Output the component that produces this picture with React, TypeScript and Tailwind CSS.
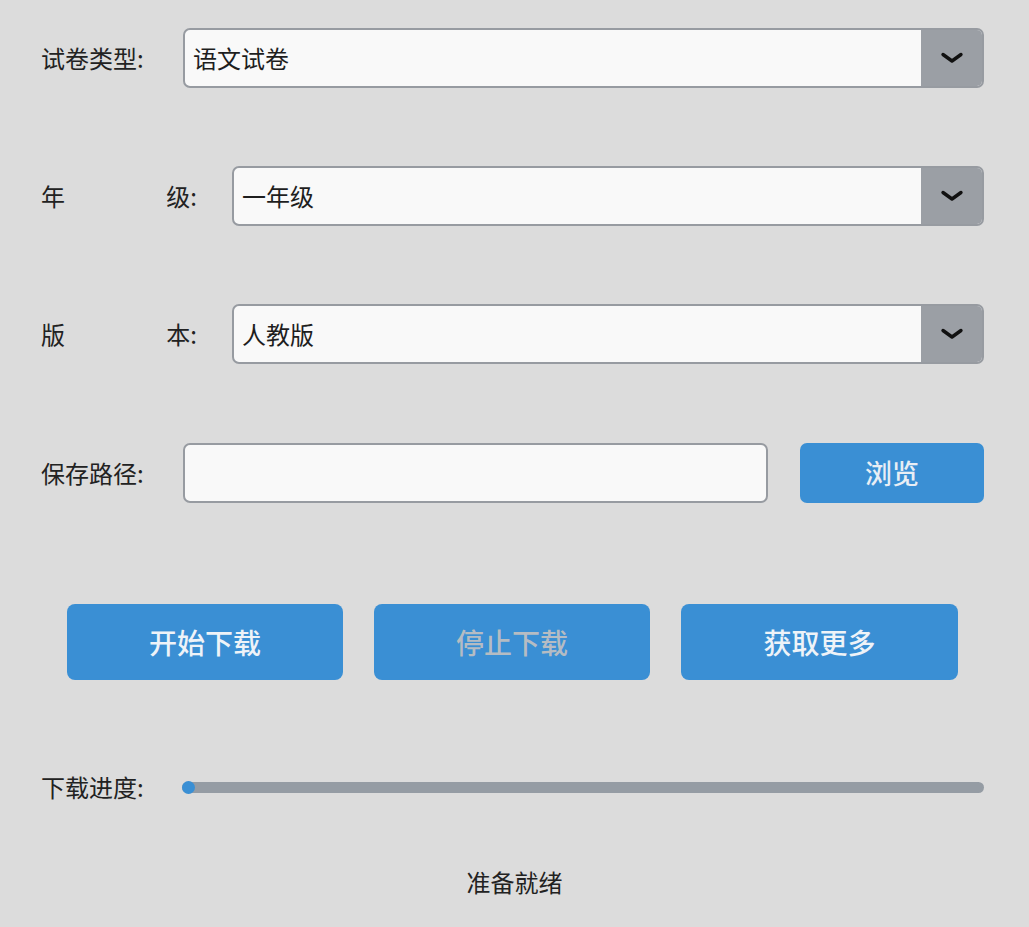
import React from 'react';

const font = { fontFamily: '"Noto Sans CJK SC", "Noto Sans", sans-serif' };

function Chevron() {
  return (
    <svg width="24" height="12" viewBox="0 0 24 12" fill="none">
      <path d="M3 2.5 L12 9 L21 2.5" stroke="#111" strokeWidth="3.4" strokeLinecap="round" strokeLinejoin="round" />
    </svg>
  );
}

function Select({ value }: { value: string }) {
  return (
    <div className="flex-1 h-[60px] flex border-2 border-[#979ba1] rounded-[7px] overflow-hidden bg-[#f9f9f9]">
      <div className="flex-1 flex items-center pl-[8px] text-[24px] text-[#1e1e1e]">{value}</div>
      <div className="w-[61px] bg-[#9b9fa5] flex items-center justify-center">
        <Chevron />
      </div>
    </div>
  );
}

function SpreadLabel({ a, b }: { a: string; b: string }) {
  return (
    <div className="w-[191px] pr-[35px] flex justify-between text-[24px] text-[#222]">
      <span>{a}</span>
      <span>{b}</span>
    </div>
  );
}

export default function App() {
  return (
    <div className="w-[1029px] h-[927px] bg-[#dcdcdc] overflow-hidden" style={font}>
      <div className="pl-[41px] pr-[45px]">
        <div className="flex items-center pt-[28px]">
          <div className="w-[142px] text-[24px] text-[#222]">试卷类型:</div>
          <Select value="语文试卷" />
        </div>

        <div className="flex items-center mt-[78px]">
          <SpreadLabel a="年" b="级:" />
          <Select value="一年级" />
        </div>

        <div className="flex items-center mt-[78px]">
          <SpreadLabel a="版" b="本:" />
          <Select value="人教版" />
        </div>

        <div className="flex items-center mt-[79px]">
          <div className="w-[142px] text-[24px] text-[#222]">保存路径:</div>
          <div className="flex-1 h-[60px] border-2 border-[#979ba1] rounded-[7px] bg-[#f9f9f9]" />
          <button className="ml-[32px] w-[184px] h-[60px] rounded-[7px] bg-[#3a8fd4] text-[27px] font-medium text-[#e8eef5]">
            浏览
          </button>
        </div>
      </div>

      <div className="flex gap-[31px] pl-[67px] mt-[101px]">
        <button className="w-[276px] h-[76px] rounded-[8px] bg-[#3a8fd4] text-[28px] font-medium text-[#eef3f8]">开始下载</button>
        <button className="w-[276px] h-[76px] rounded-[8px] bg-[#3a8fd4] text-[28px] font-medium text-[#b5bcc3]">停止下载</button>
        <button className="w-[277px] h-[76px] rounded-[8px] bg-[#3a8fd4] text-[28px] font-medium text-[#eef3f8]">获取更多</button>
      </div>

      <div className="flex items-center pl-[41px] pr-[45px] mt-[89px]">
        <div className="w-[141px] text-[24px] text-[#222]">下载进度:</div>
        <div className="flex-1 h-[11px] rounded-full bg-[#959ca4] flex items-center">
          <div className="w-[13px] h-[13px] rounded-full bg-[#3a8fd4]" />
        </div>
      </div>

      <div className="text-center text-[24px] text-[#222] mt-[59px]">准备就绪</div>
    </div>
  );
}
